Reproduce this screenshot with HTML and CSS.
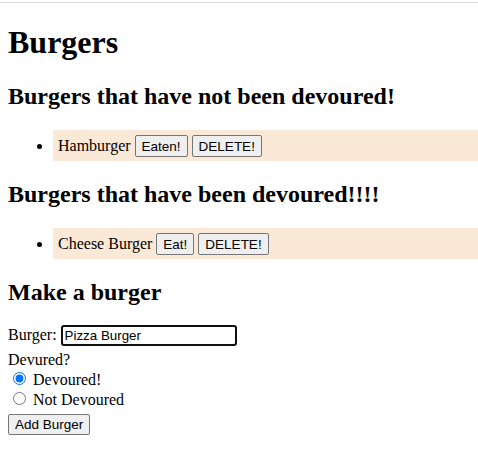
FILE: index.html
```html
<!DOCTYPE html>
<html>
<head>
<meta charset="utf-8">
<title>Burgers</title>
<link rel="stylesheet" href="styles.css">
</head>
<body>
<h1 class="title">Burgers</h1>
<h2>Burgers that have not been devoured!</h2>
<ul class="list">
  <li class="item">Hamburger <button class="btn">Eaten!</button> <button class="btn">DELETE!</button></li>
</ul>
<h2>Burgers that have been devoured!!!!</h2>
<ul class="list">
  <li class="item">Cheese Burger <button class="btn">Eat!</button> <button class="btn">DELETE!</button></li>
</ul>
<h2>Make a burger</h2>
<form class="form">
  <label for="bn">Burger:</label> <input id="bn" class="text-input" type="text" value="Pizza Burger"><br>
  Devured?<br>
  <input type="radio" name="dev" id="d1" checked class="radio"> <label for="d1">Devoured!</label><br>
  <input type="radio" name="dev" id="d2" class="radio"> <label for="d2">Not Devoured</label><br>
  <button type="button" class="btn btn-submit">Add Burger</button>
</form>
</body>
</html>
```
FILE: styles.css
```css
html {
  font-family: "Liberation Serif", "Times New Roman", serif;
  font-size: 16px;
  color: #000;
  background: #fff;
}
html::before {
  content: "";
  position: absolute;
  top: 2px;
  left: 0;
  right: 0;
  height: 1px;
  background: #dddddd;
}
body {
  margin: 0;
  padding: 3px 0 8px 8px;
}
.title {
  margin-top: 21.44px;
}
.list {
  padding-left: 40px;
}
.item {
  background: #fae9d7;
  margin-left: 5px;
  padding: 5px 5px 4px;
}
.btn {
  font-family: "Liberation Sans", Arial, sans-serif;
  font-size: 13.5px;
  color: #000;
  background: #efefef;
  border: 1px solid #767676;
  border-radius: 2px;
  padding: 3px 6px 2px;
}
.btn-submit {
  margin-top: 5px;
  padding: 2px 6px 2px;
}
.text-input {
  font-family: "Liberation Sans", Arial, sans-serif;
  font-size: 13.33px;
  color: #000;
  border: 2px solid #101010;
  border-radius: 3px;
  padding: 1px 2px 1px;
  width: 168px;
  margin: 0 0 5px;
  outline: none;
}
.radio {
  margin: 3px 3px 0 5px;
  accent-color: #0075ff;
}
```
